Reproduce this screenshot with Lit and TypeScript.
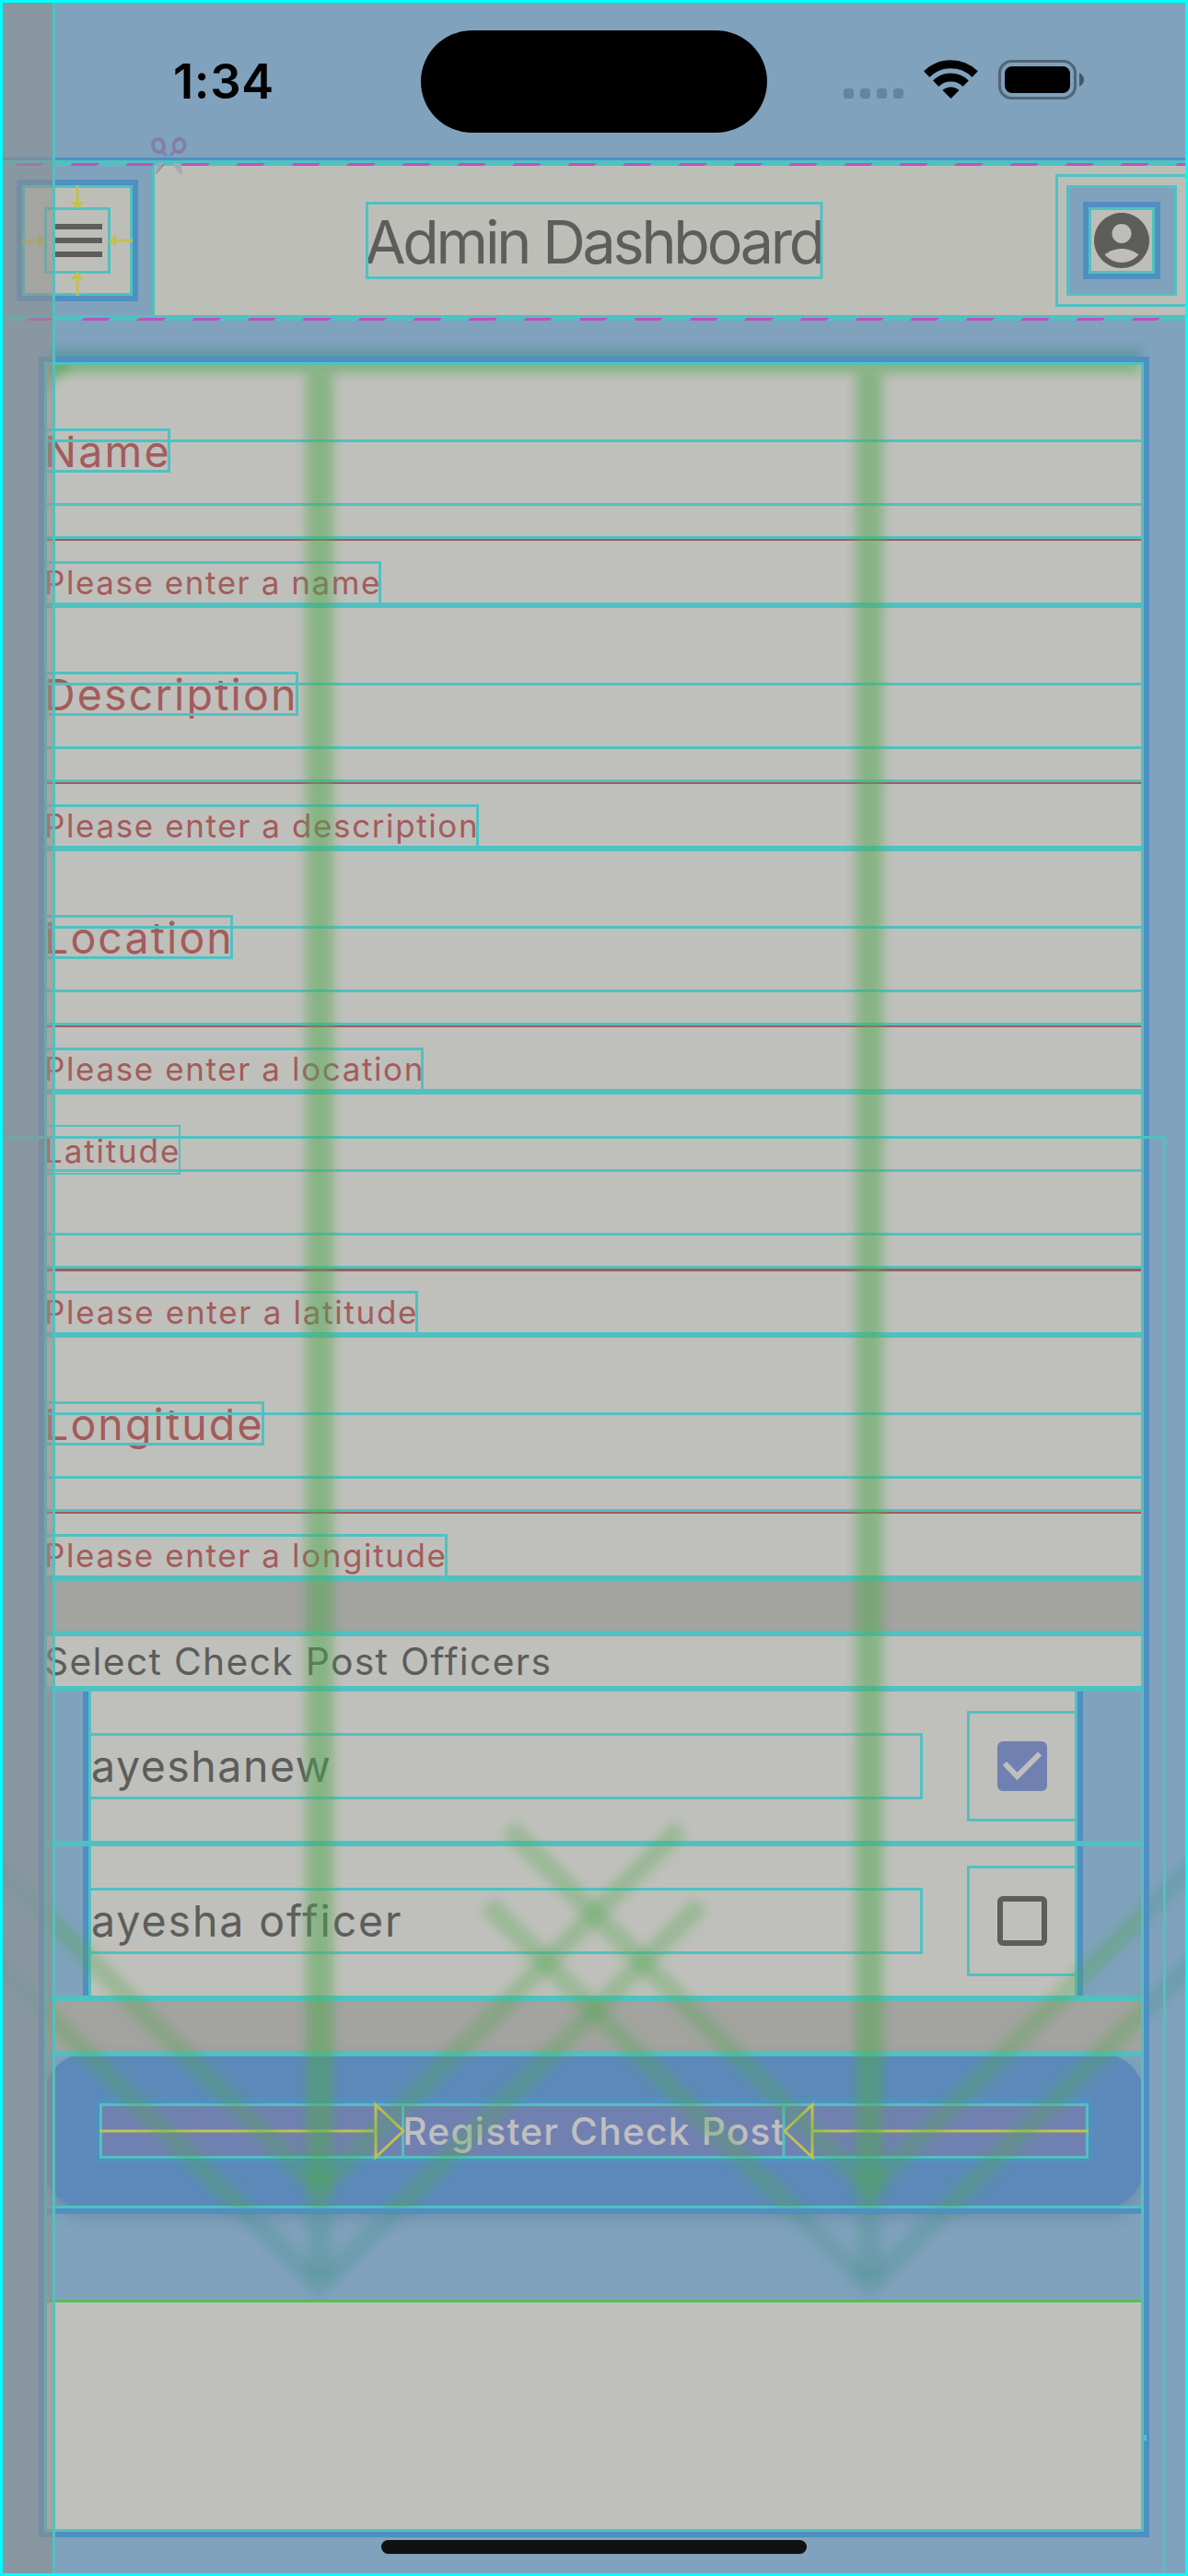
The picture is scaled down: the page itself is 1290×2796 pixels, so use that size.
import { LitElement, html, css, svg } from "lit";
import { customElement, property } from "lit/decorators.js";

type Field = { label: string; error: string; focused?: boolean; ls: number; es: number };

const FIELDS: Field[] = [
  { label: "Name", error: "Please enter a name", ls: 2.2, es: 1.55 },
  { label: "Description", error: "Please enter a description", ls: 2.2, es: 1.6 },
  { label: "Location", error: "Please enter a location", ls: 2.1, es: 1.6 },
  { label: "Latitude", error: "Please enter a latitude", focused: true, ls: 1.85, es: 1.7 },
  { label: "Longitude", error: "Please enter a longitude", ls: 2.1, es: 1.6 },
];
const OFFICERS = [
  { name: "ayeshanew", checked: true, ls: 1.5 },
  { name: "ayesha officer", checked: false, ls: 1.9 },
];

/* Layout guides painted above the screen: outlines, arrows and scroll shadows. */
@customElement("debug-guides")
class DebugGuides extends LitElement {
  static styles = css`
    :host { display: block; }
    svg { display: block; }
    .t { fill: #50c1c1; }
    .o { fill: none; stroke: #50c1c1; stroke-width: 3; }
    .thin { fill: none; stroke: #50c1c1; stroke-width: 2; }
    .b { fill: #508fc2; }
    .bo { fill: none; stroke: #508fc2; stroke-width: 6; }
    .m { fill: #c150c1; }
    .y { fill: none; stroke: #c1c150; stroke-width: 3; }
    .yf { fill: #c1c150; }
    .inGreen { stroke: #50a850; fill: none; }
    .outGreen { stroke: #3e9184; fill: none; }
  `;

  private box(x1: number, y1: number, x2: number, y2: number, cls = "o") {
    const h = cls === "bo" ? 3 : cls === "thin" ? 1 : 1.5;
    return svg`<rect class=${cls} x=${x1 + h} y=${y1 + h} width=${x2 - x1 - 2 * h} height=${y2 - y1 - 2 * h}/>`;
  }
  private bar(x1: number, y1: number, x2: number, y2: number, cls = "t") {
    return svg`<rect class=${cls} x=${x1} y=${y1} width=${x2 - x1} height=${y2 - y1}/>`;
  }
  private dashes(start: number, y: number) {
    const out = [];
    for (let x = start; x < 1287; x += 60) {
      out.push(svg`<path class="m" d="M${x} ${y + 3}l3-3h29l-3 3z"/>`);
    }
    return out;
  }
  private arrows(cls: string) {
    const shaft = 0.29;
    const arm = cls === "inGreen" ? 0.33 : 0.27;
    const heads = [347, 944].map((x) =>
      [2376, 2481].map((y, i) => {
        const r = 392 + i * 22;
        return svg`<g opacity=${shaft} class=${cls} filter="url(#soft)">
          <path stroke-width="28" d="M${x} 405V${y - 6}"/></g>
          <g opacity=${arm} class=${cls} filter="url(#soft)">
          <path stroke-width="21" d="M${x - r} ${y - r}L${x} ${y}L${x + r} ${y - r}"/></g>`;
      }),
    );
    return svg`${heads}
      <g class=${cls} opacity=".52" filter="url(#soft)"><path stroke-width="26" d="M51 392H1239"/></g>`;
  }

  render() {
    const errRight = [414, 520, 460, 454, 486];
    const labelRight = [185, 324, 253, 196, 287];
    return html`<svg width="1290" height="2796" viewBox="0 0 1290 2796">
      <defs>
        <filter id="soft" filterUnits="userSpaceOnUse" x="-80" y="330" width="1450" height="2200"><feGaussianBlur stdDeviation="6"/></filter>
        <clipPath id="inside"><rect x="51" y="396" width="1188" height="2001"/></clipPath>
        <clipPath id="outside"><path d="M3 348H1287V393H3zM3 393H51V2793H3zM1239 393H1287V2793H1239zM51 2397H1239V2520H51z"/></clipPath>
      </defs>
      <g clip-path="url(#outside)">${this.arrows("outGreen")}</g>

      ${this.bar(3, 171, 1287, 174, "b")}
      <g fill="none" stroke="#837fa4" stroke-width="3.800">
        <ellipse cx="172" cy="158" rx="6" ry="7.300" transform="rotate(-16 172 158)"/>
        <ellipse cx="194.500" cy="158" rx="6" ry="7.300" transform="rotate(16 194.500 158)"/>
        <path stroke-width="3" d="M176 164L182.500 171L190 164"/>
      </g>
      <path fill="#6ba0cf" d="M179 170l4-3.500 6 4.500h-10z"/>
      ${this.bar(3, 174, 1287, 180)} ${this.dashes(16, 177)}
      ${this.bar(3, 342, 1287, 348)} ${this.dashes(28, 345)}
      <path fill="#a5a7aa" d="M172 177h7l-10 13c-1-4 0-9 3-13z"/>
      <path fill="#7f8386" d="M177 178h2l-10 12z"/>
      <path fill="#a5acb1" d="M187.500 177h7c3 4 4.500 9 3.500 13q-7-5-10.500-13z"/>
      <path fill="#7f8386" d="M189 181q3 6 9 9l-2-1q-5-3-7-8z"/>
      ${this.bar(165, 180, 168, 342)}
      ${this.box(18, 195, 150, 327, "bo")} ${this.box(24, 201, 144, 321)} ${this.box(48, 225, 120, 297)}
      <path class="y" d="M84 201V220M84 321V302M24 261H43M144 261H125"/>
      <path class="yf" d="M76.500 219h15l-7.500 8zM76.500 303h15l-7.500-8zM42 253.500v15l8-7.500zM126 253.500v15l-8-7.500z"/>
      ${this.box(397, 219, 893.5, 303)}
      ${this.bar(1146, 189, 1287, 192)} ${this.bar(1146, 330, 1287, 333)} ${this.bar(1146, 189, 1149, 333)}
      ${this.box(1158, 201, 1278, 321)} ${this.box(1176, 219, 1260, 303, "bo")} ${this.box(1182, 225, 1254, 297)}

      ${this.box(42, 387, 1248, 2754, "bo")} ${this.box(48, 393, 1242, 2748)}
      ${FIELDS.map((f, i) => {
        const o = i * 264;
        return svg`
          ${f.focused ? this.box(48, 429 + o, labelRight[i], 483 + o, "thin") : this.box(48, 465 + o, labelRight[i], 513 + o)}
          ${this.bar(51, 477 + o, 1239, 480 + o)} ${this.bar(51, 546 + o, 1239, 549 + o)}
          ${this.bar(51, 582 + o, 1239, 585 + o)}
          ${this.box(48, 609 + o, errRight[i], 657 + o)}
          ${this.bar(51, 654 + o, 1239, 660 + o)}`;
      })}
      ${this.bar(3, 1233, 1266, 1236)} ${this.bar(1263, 1233, 1266, 2793)}
      ${[1770, 1830, 1998, 2166, 2226].map((y) => this.bar(51, y, 1239, y + 6))}
      ${[0, 168].map(
        (o) => svg`${this.bar(90, 1836 + o, 96, 1998 + o, "b")} ${this.bar(1170, 1836 + o, 1176, 1998 + o, "b")}
          ${this.bar(96, 1836 + o, 99, 1998 + o)} ${this.bar(1167, 1836 + o, 1170, 1998 + o)}
          ${this.box(96, 1881 + o, 1002, 1953 + o)} ${this.box(1050, 1857 + o, 1170, 1977 + o)}`,
      )}
      ${this.bar(51, 2394, 1239, 2397)} ${this.bar(51, 2397, 1239, 2403, "b")}
      ${this.box(108, 2283, 1182, 2343)} ${this.bar(436, 2283, 439, 2343)} ${this.bar(849.5, 2283, 852.5, 2343)}
      <path class="y" d="M108 2313H406M408 2284.500V2341.500L438 2313zM1182 2313H883M882 2284.500V2341.500L852 2313z"/>
      <rect x="51" y="2496" width="1188" height="3" fill="#50c150"/>
      ${this.bar(1239, 2643, 1245, 2649)}
      <g clip-path="url(#inside)">
        ${this.arrows("inGreen")}
        <path d="M45 390H84L45 428z" fill="#50a850" opacity=".5" filter="url(#soft)"/>
      </g>
      <rect x="3" y="3" width="54" height="2790" fill="rgba(144,144,141,.565)"/>
      ${this.bar(57, 3, 60, 2793)}
    </svg>`;
  }
}

@customElement("status-bar")
class StatusBar extends LitElement {
  static styles = css`
    :host { display: flex; height: 171px; flex: none; align-items: flex-start; justify-content: space-between; padding-top: 30px; box-sizing: border-box; }
    .time { width: 454px; height: 111px; box-sizing: border-box; padding-left: 185px; font: 600 52.5px/111px Inter, sans-serif; color: #000; letter-spacing: 0.6px; }
    .island { width: 376px; height: 111px; border-radius: 56px; background: #000; }
    .icons { width: 454px; height: 111px; }
    svg { display: block; }
  `;
  render() {
    return html`<div class="time">1:34</div>
      <div class="island"></div>
      <svg class="icons" viewBox="833 33 454 111">
        ${[916, 934, 952, 970].map((x) => svg`<rect x=${x} y="96" width="11" height="11" rx="3.500" fill="#67849a"/>`)}
        <g fill="none" stroke="#000" stroke-width="9">
          <path d="M1006.300 80.500A37.300 37.300 0 0 1 1058.700 80.500"/>
          <path d="M1016.300 90.700A23 23 0 0 1 1048.700 90.700"/>
        </g>
        <path d="M1023.500 98A13 13 0 0 1 1041.500 98L1032.500 107z"/>
        <rect x="1085.500" y="66.500" width="82" height="40" rx="13" fill="none" stroke="#506679" stroke-width="3.200"/>
        <rect x="1091" y="72" width="71" height="29" rx="8"/>
        <path d="M1172 79q5 2.500 5 7.500t-5 7.500z" fill="#455869"/>
      </svg>`;
  }
}

@customElement("form-field")
class FormField extends LitElement {
  @property({ attribute: false }) field!: Field;
  static styles = css`
    :host { display: flex; flex-direction: column; height: 264px; box-sizing: border-box; flex: none; color: #a35c5c; font-family: Inter, sans-serif; white-space: nowrap; }
    .entry { height: 189px; box-sizing: content-box; border-bottom: 2px solid #a35c5c; margin: 0 3px 0 0; }
    .label { padding-top: 70px; font-size: 46.5px; line-height: 48px; }
    .focused { border-bottom-width: 3px; }
    .focused .label { padding-top: 39px; font-size: 35px; line-height: 44px; }
    .error { height: 44px; margin-top: 23px; font-size: 35px; line-height: 44px; }
    .focused + .error { margin-top: 22px; }
  `;
  render() {
    const f = this.field;
    return html`<div class="entry ${f.focused ? "focused" : ""}">
        <div class="label" style="letter-spacing:${f.ls}px">${f.label}</div>
      </div>
      <div class="error" style="letter-spacing:${f.es}px">${f.error}</div>`;
  }
}

@customElement("app-root")
class AppRoot extends LitElement {
  static styles = css`
    :host { display: block; }
    .screen { position: relative; display: flex; flex-direction: column; width: 1290px; height: 2796px; box-sizing: border-box; border: 3px solid #0ff; background: #80a2bd; font-family: Inter, sans-serif; color: #5d5d5b; overflow: hidden; white-space: nowrap; }
    .header { display: flex; align-items: center; height: 162px; margin: 6px 0; background: #bebeb9; flex: none; }
    .leading { display: flex; width: 162px; height: 162px; box-sizing: border-box; padding: 15px; background: #80a2bd; }
    .menu { display: flex; align-items: center; justify-content: center; width: 132px; height: 132px; background: #bebeb9; }
    .title { flex: 1; padding: 3px 0 0 231px; font-size: 64.6px; line-height: 84px; letter-spacing: -3.25px; }
    .account { display: flex; align-items: center; justify-content: center; width: 120px; height: 120px; margin-right: 9px; background: #80a2bd; }
    .disc { display: block; width: 78px; height: 78px; background: #bebeb9; }
    .card { display: flex; flex-direction: column; width: 1194px; height: 2355px; margin: 45px 45px 0; padding-top: 3px; box-sizing: border-box; background: #bfc0bb; flex: none; overflow: hidden; }
    .gap { height: 57px; background: #a3a3a0; flex: none; }
    .gap.tall { height: 60px; }
    .select { height: 60px; line-height: 60px; font-size: 40.8px; letter-spacing: 1.32px; flex: none; }
    .row { display: flex; align-items: center; height: 168px; box-sizing: border-box; padding: 0 72px 0 48px; background: linear-gradient(#bfc0bb, #bfc0bb) 48px 0 / 1074px 100% no-repeat #80a2bd; font-size: 46.5px; flex: none; }
    .name { flex: 1; padding-left: 3px; line-height: 66px; }
    .check { display: block; width: 54px; height: 54px; margin-right: 33px; }
    .footer { display: flex; flex-direction: column; height: 267px; background: #80a2bd; flex: none; }
    .button { display: flex; align-items: center; justify-content: center; height: 168px; border-radius: 46px; background: #5c89b9; box-shadow: 0 9px 18px rgba(60, 90, 120, .3); }
    .inner { display: flex; align-items: center; justify-content: center; width: 1086px; height: 72px; box-sizing: border-box; border: 6px solid #548fc0; background: #7081b1; color: #c0bfc0; font-size: 40.8px; font-weight: 500; letter-spacing: 1.15px; }
    .home { width: 462px; height: 15px; margin: 9px auto 0; border-radius: 8px; background: #111; flex: none; }
    .guides { position: absolute; left: -3px; top: -3px; }
  `;
  render() {
    return html`<div class="screen">
      <status-bar></status-bar>
      <div class="header">
        <div class="leading"><div class="menu">
          <svg width="54" height="36" viewBox="0 0 54 36" fill="#5d5d5b"><path d="M0 0h54v6H0zM0 15h54v6H0zM0 30h54v6H0z"/></svg>
        </div></div>
        <div class="title">Admin Dashboard</div>
        <div class="account"><svg class="disc" viewBox="-1 -1 26 26"><path fill="#5d5d5b" d="M12 2C6.480 2 2 6.480 2 12s4.480 10 10 10 10-4.480 10-10S17.520 2 12 2zm0 4c1.930 0 3.500 1.570 3.500 3.500S13.930 13 12 13s-3.500-1.570-3.500-3.500S10.070 6 12 6zm0 14c-2.030 0-4.430-.820-6.140-2.880C7.550 15.800 9.680 15 12 15s4.450.800 6.140 2.120C16.430 19.180 14.030 20 12 20z"/></svg></div>
      </div>
      <div class="card">
        ${FIELDS.map((f) => html`<form-field .field=${f}></form-field>`)}
        <div class="gap"></div>
        <div class="select">Select Check Post Officers</div>
        ${OFFICERS.map(
          (o) => html`<div class="row"><span class="name" style="letter-spacing:${o.ls}px">${o.name}</span>
            <svg class="check" viewBox="0 0 54 54">${o.checked
              ? svg`<rect width="54" height="54" rx="6" fill="#7081b1"/><path d="M8 24L21.500 38L46 13.500" fill="none" stroke="#c0bfc0" stroke-width="6"/>`
              : svg`<rect x="3" y="3" width="48" height="48" rx="3" fill="none" stroke="#5d5d5b" stroke-width="6"/>`}</svg></div>`,
        )}
        <div class="gap tall"></div>
        <div class="footer"><div class="button"><div class="inner">Register Check Post</div></div></div>
      </div>
      <div class="home"></div>
      <debug-guides class="guides"></debug-guides>
    </div>`;
  }
}
